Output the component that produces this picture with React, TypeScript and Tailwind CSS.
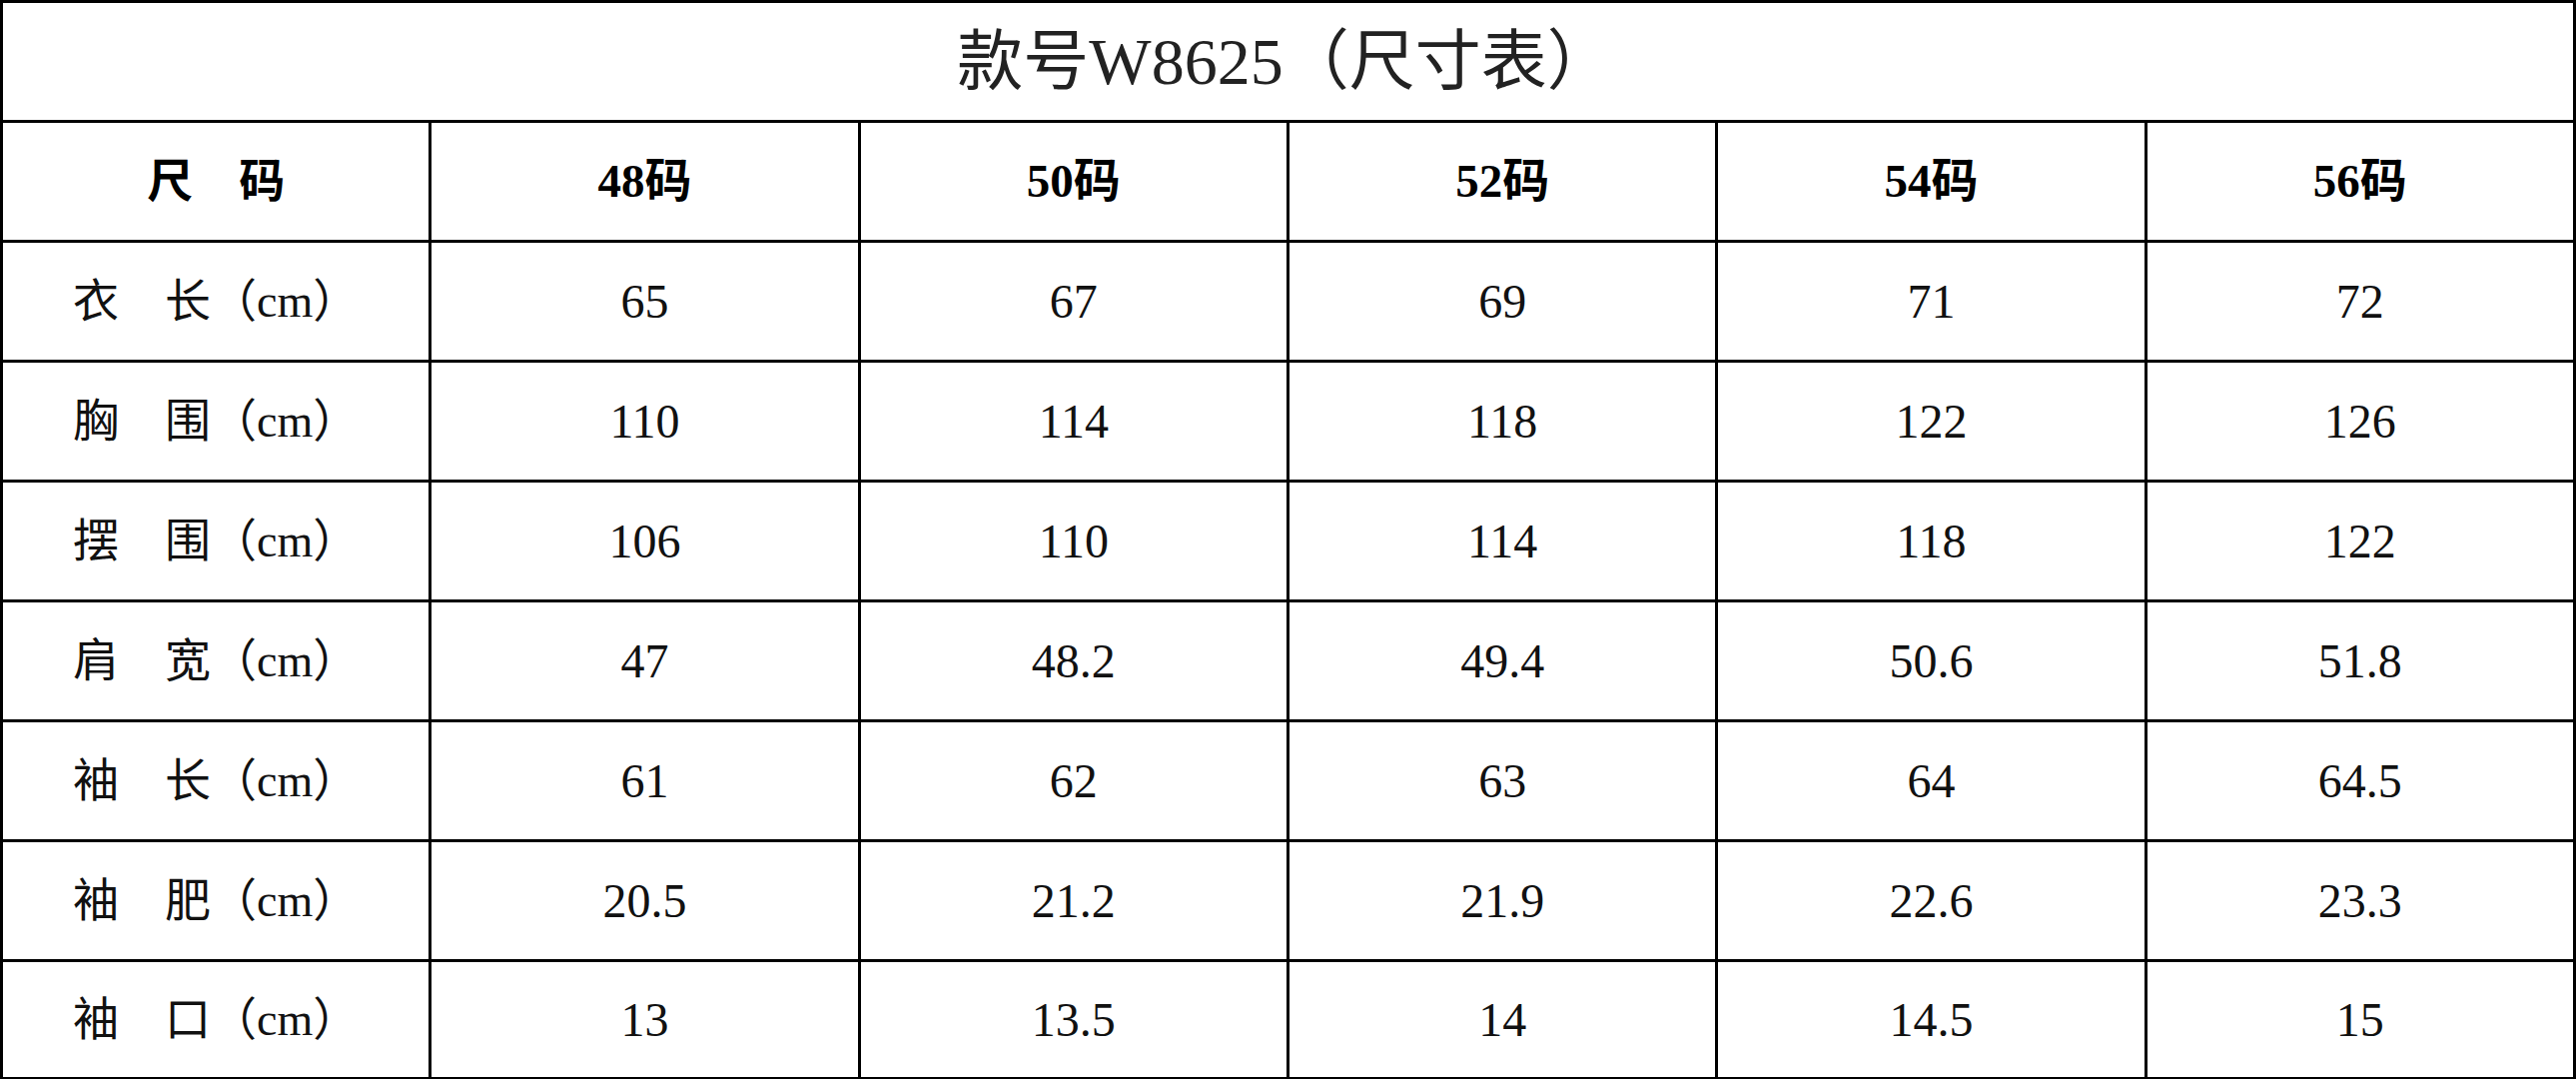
import React from "react";

const sizes = ["48码", "50码", "52码", "54码", "56码"];

const rows = [
  { label: "衣　长（cm）", values: ["65", "67", "69", "71", "72"] },
  { label: "胸　围（cm）", values: ["110", "114", "118", "122", "126"] },
  { label: "摆　围（cm）", values: ["106", "110", "114", "118", "122"] },
  { label: "肩　宽（cm）", values: ["47", "48.2", "49.4", "50.6", "51.8"] },
  { label: "袖　长（cm）", values: ["61", "62", "63", "64", "64.5"] },
  { label: "袖　肥（cm）", values: ["20.5", "21.2", "21.9", "22.6", "23.3"] },
  { label: "袖　口（cm）", values: ["13", "13.5", "14", "14.5", "15"] },
];

const font = "font-['Liberation_Serif','Noto_Sans_CJK_SC',serif]";

const App = () => {
  return (
    <div className={`w-[2579px] h-[1080px] bg-white overflow-hidden ${font}`}>
      <table className="w-[2579px] table-fixed border-collapse">
        <tbody>
          <tr className="h-[120px]">
            <td
              colSpan={6}
              className="border-[3px] border-black text-center text-[66px] leading-none text-[#222] pr-[6px]"
            >
              款号W8625（尺寸表）
            </td>
          </tr>
          <tr className="h-[120px]">
            <td className="border-[3px] border-black text-center text-[46px] font-bold text-black">
              尺　码
            </td>
            {sizes.map((s) => (
              <td
                key={s}
                className="border-[3px] border-black text-center text-[47px] font-bold text-black"
              >
                {s}
              </td>
            ))}
          </tr>
          {rows.map((row, r) => (
            <tr
              key={row.label}
              className={r === rows.length - 1 ? "h-[118px]" : "h-[120px]"}
            >
              <td className="border-[3px] border-black text-center text-[46px] text-[#111]">
                {row.label}
              </td>
              {row.values.map((v, i) => (
                <td
                  key={i}
                  className="border-[3px] border-black text-center text-[48px] text-[#111]"
                >
                  {v}
                </td>
              ))}
            </tr>
          ))}
        </tbody>
      </table>
    </div>
  );
};

export default App;
